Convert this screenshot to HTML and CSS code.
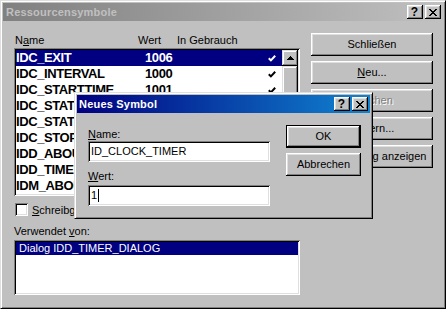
FILE: index.html
```html
<!DOCTYPE html>
<html lang="de">
<head>
<meta charset="utf-8">
<title>Ressourcensymbole</title>
<link rel="stylesheet" href="styles.css">
</head>
<body>
<div class="win">
  <div class="titlebar inactive">
    <span class="title-text">Ressourcensymbole</span>
    <span class="tb-btn help">?</span>
    <span class="tb-btn close"><svg width="8" height="7" viewBox="0 0 8 7"><path d="M0 0h2v1H0zM6 0h2v1H6zM1 1h2v1H1zM5 1h2v1H5zM2 2h4v1H2zM3 3h2v1H3zM2 4h4v1H2zM1 5h2v1H1zM5 5h2v1H5zM0 6h2v1H0zM6 6h2v1H6z" fill="#000"/></svg></span>
  </div>
  <div class="client">
    <div class="left">
      <div class="hdr">
        <span class="h-name">N<u>a</u>me</span>
        <span class="h-wert">Wert</span>
        <span class="h-use">In Gebrauch</span>
      </div>
      <div class="list">
        <div class="rows">
          <div class="row sel"><span>IDC_EXIT</span><span>1006</span><span class="ck"><svg width="8" height="7" viewBox="0 0 8 7"><polyline points="0.8,3.2 2.9,5.4 7.2,0.8" fill="none" stroke="#fff" stroke-width="2"/></svg></span></div>
          <div class="row"><span>IDC_INTERVAL</span><span>1000</span><span class="ck"><svg width="8" height="7" viewBox="0 0 8 7"><polyline points="0.8,3.2 2.9,5.4 7.2,0.8" fill="none" stroke="#000" stroke-width="2"/></svg></span></div>
          <div class="row"><span>IDC_STARTTIME</span><span>1001</span><span class="ck"><svg width="8" height="7" viewBox="0 0 8 7"><polyline points="0.8,3.2 2.9,5.4 7.2,0.8" fill="none" stroke="#000" stroke-width="2"/></svg></span></div>
          <div class="row"><span>IDC_STATUS</span><span>1002</span><span class="ck"></span></div>
          <div class="row"><span>IDC_STATTIME</span><span>1003</span><span class="ck"></span></div>
          <div class="row"><span>IDC_STOP</span><span>1004</span><span class="ck"></span></div>
          <div class="row"><span>IDD_ABOUTBOX</span><span>100</span><span class="ck"></span></div>
          <div class="row"><span>IDD_TIMER_DIALOG</span><span>102</span><span class="ck"></span></div>
          <div class="row"><span>IDM_ABOUTBOX</span><span>16</span><span class="ck"></span></div>
        </div>
        <div class="sb">
          <div class="sb-btn"><svg width="7" height="4" viewBox="0 0 7 4"><path d="M3 0h1v1h1v1h1v1h1v1H0V3h1V2h1V1h1z" fill="#000"/></svg></div>
          <div class="sb-thumb"></div>
        </div>
      </div>
      <div class="chk-row">
        <span class="chk"></span>
        <span class="chk-label"><u>S</u>chreibgeschützt</span>
      </div>
      <div class="lbl-used">Verwendet <u>v</u>on:</div>
      <div class="list2">
        <div class="row2 sel">Dialog IDD_TIMER_DIALOG</div>
      </div>
    </div>
    <div class="right">
      <div class="btn">Schließen</div>
      <div class="btn"><span><u>N</u>eu...</span></div>
      <div class="btn disabled">Löschen</div>
      <div class="btn"><span><u>Ä</u>ndern...</span></div>
      <div class="btn">Verwendung anzeigen</div>
    </div>
  </div>

  <div class="dlg">
    <div class="titlebar active">
      <span class="title-text">Neues Symbol</span>
      <span class="tb-btn help">?</span>
      <span class="tb-btn close"><svg width="8" height="7" viewBox="0 0 8 7"><path d="M0 0h2v1H0zM6 0h2v1H6zM1 1h2v1H1zM5 1h2v1H5zM2 2h4v1H2zM3 3h2v1H3zM2 4h4v1H2zM1 5h2v1H1zM5 5h2v1H5zM0 6h2v1H0zM6 6h2v1H6z" fill="#000"/></svg></span>
    </div>
    <div class="dlg-client">
      <div class="dlg-left">
        <div class="dlbl first"><u>N</u>ame:</div>
        <div class="edit">ID_CLOCK_TIMER</div>
        <div class="dlbl second"><u>W</u>ert:</div>
        <div class="edit edit2">1<span class="caret"></span></div>
      </div>
      <div class="dlg-right">
        <div class="btn default">OK</div>
        <div class="btn">Abbrechen</div>
      </div>
    </div>
  </div>
</div>
</body>
</html>
```
FILE: styles.css
```css
* { box-sizing: border-box; }
html, body { margin: 0; padding: 0; }
body {
  width: 446px;
  height: 309px;
  overflow: hidden;
  background: #c0c0c0;
  font-family: "Liberation Sans", Arial, sans-serif;
  font-size: 11px;
  color: #000;
}
u { text-decoration: underline; text-underline-offset: 1px; }

.win {
  position: relative;
  width: 446px;
  height: 309px;
  background: #c0c0c0;
  border: 1px solid;
  border-color: #dfdfdf #000 #000 #dfdfdf;
  box-shadow: inset 1px 1px #fff, inset -1px -1px #808080;
  padding: 2px;
  display: flex;
  flex-direction: column;
}

.titlebar {
  height: 18px;
  flex: none;
  display: flex;
  align-items: center;
  padding: 0 2px 0 3px;
  font-weight: bold;
  letter-spacing: 0.2px;
}
.titlebar.inactive {
  background: linear-gradient(to right, #808080, #c0c0c0);
  color: #c0c0c0;
}
.titlebar.active {
  background: linear-gradient(to right, #000080, #1084d0);
  color: #fff;
  padding-left: 2px;
}
.title-text { flex: 1; white-space: nowrap; }

.tb-btn {
  width: 16px;
  height: 14px;
  flex: none;
  background: #c0c0c0;
  color: #000;
  box-shadow: inset -1px -1px #000, inset 1px 1px #fff, inset -2px -2px #808080, inset 2px 2px #dfdfdf;
  display: flex;
  align-items: center;
  justify-content: center;
  font-size: 12px;
  font-weight: bold;
  line-height: 12px;
  letter-spacing: 0;
}
.tb-btn.help { padding-right: 1px; }
.tb-btn + .tb-btn { margin-left: 2px; }
.tb-btn svg { display: block; margin-left: -1px; }

.client {
  display: flex;
  padding: 12px 0 0 11px;
}
.left {
  width: 286px;
  display: flex;
  flex-direction: column;
}
.right {
  width: 122px;
  margin-left: 11px;
  display: flex;
  flex-direction: column;
  gap: 5px;
}

.btn {
  height: 23px;
  background: #c0c0c0;
  box-shadow: inset -1px -1px #000, inset 1px 1px #fff, inset -2px -2px #808080, inset 2px 2px #dfdfdf;
  display: flex;
  align-items: center;
  justify-content: center;
  white-space: nowrap;
  padding-bottom: 1px;
}
.btn.disabled {
  color: #808080;
  text-shadow: 1px 1px #fff;
}
.btn.default {
  border: 1px solid #000;
}

.hdr {
  display: flex;
  height: 13px;
  line-height: 13px;
  margin-top: 1px;
  padding-left: 1px;
}
.h-name { width: 123px; }
.h-wert { width: 39px; }

.list {
  margin-top: 1px;
  height: 148px;
  background: #fff;
  box-shadow: inset 1px 1px #808080, inset -1px -1px #fff, inset 2px 2px #000, inset -2px -2px #dfdfdf;
  padding: 2px;
  display: flex;
}
.rows { flex: 1; overflow: hidden; }
.row {
  height: 16px;
  line-height: 16px;
  display: grid;
  grid-template-columns: 129px 123px 1fr;
  font-weight: bold;
  font-size: 13px;
  letter-spacing: -0.4px;
  white-space: nowrap;
}
.row.sel { background: #000080; color: #fff; }
.ck { display: flex; align-items: center; }
.ck svg { display: block; }

.sb {
  width: 16px;
  display: flex;
  flex-direction: column;
}
.sb-btn, .sb-thumb {
  background: #c0c0c0;
  box-shadow: inset -1px -1px #000, inset 1px 1px #dfdfdf, inset -2px -2px #808080, inset 2px 2px #fff;
}
.sb-btn {
  height: 16px;
  display: flex;
  align-items: center;
  justify-content: center;
}
.sb-btn svg { display: block; margin-top: -1px; }
.sb-thumb { height: 60px; }

.chk-row {
  margin-top: 7px;
  height: 13px;
  display: flex;
  align-items: center;
  padding-left: 1px;
}
.chk {
  width: 13px;
  height: 13px;
  background: #fff;
  box-shadow: inset 1px 1px #808080, inset -1px -1px #fff, inset 2px 2px #000, inset -2px -2px #dfdfdf;
}
.chk-label { margin-left: 4px; white-space: nowrap; }

.lbl-used {
  margin-top: 9px;
  height: 13px;
  line-height: 13px;
}
.list2 {
  margin-top: 2px;
  height: 55px;
  background: #fff;
  box-shadow: inset 1px 1px #808080, inset -1px -1px #fff, inset 2px 2px #000, inset -2px -2px #dfdfdf;
  padding: 2px;
}
.row2 {
  height: 13px;
  line-height: 13px;
  padding-left: 3px;
  white-space: nowrap;
}
.row2.sel { background: #000080; color: #fff; }

.dlg {
  position: absolute;
  left: 73px;
  top: 91px;
  width: 299px;
  height: 127px;
  background: #c0c0c0;
  border: 1px solid;
  border-color: #dfdfdf #000 #000 #dfdfdf;
  box-shadow: inset 1px 1px #fff, inset -1px -1px #808080;
  padding: 2px;
  display: flex;
  flex-direction: column;
}
.dlg-client {
  display: flex;
  padding: 12px 0 0 11px;
}
.dlg-left { width: 182px; display: flex; flex-direction: column; }
.dlg-right {
  width: 75px;
  margin-left: 16px;
  display: flex;
  flex-direction: column;
  gap: 5px;
}
.dlbl { height: 13px; line-height: 13px; }
.dlbl.first { margin-top: 3px; }
.dlbl.second { margin-top: 8px; }
.edit {
  margin-top: 0;
  height: 21px;
  line-height: 21px;
  background: #fff;
  box-shadow: inset 1px 1px #808080, inset -1px -1px #fff, inset 2px 2px #000, inset -2px -2px #dfdfdf;
  padding-left: 3px;
  white-space: nowrap;
  display: flex;
  align-items: center;
}
.edit2 { margin-top: 2px; }
.caret {
  display: inline-block;
  width: 1px;
  height: 13px;
  background: #000;
  margin-left: 1px;
}
```
